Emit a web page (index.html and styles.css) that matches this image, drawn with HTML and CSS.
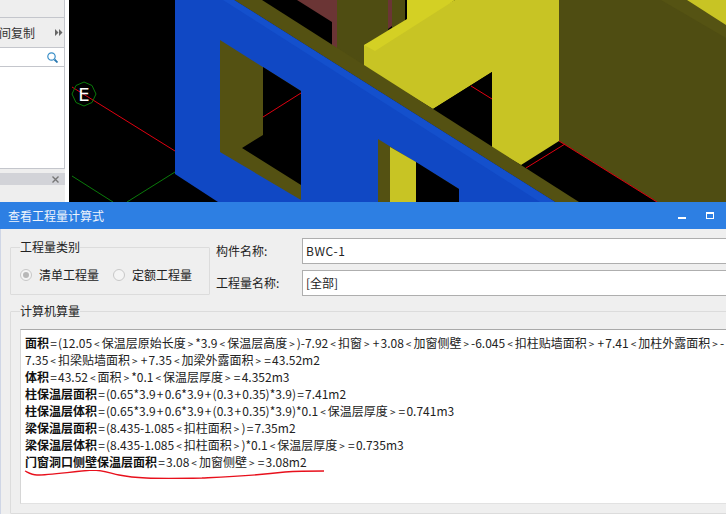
FILE: index.html
```html
<!DOCTYPE html>
<html lang="zh-CN">
<head>
<meta charset="utf-8">
<title>查看工程量计算式</title>
<link rel="stylesheet" href="styles.css">
</head>
<body>
<div class="app">
  <div class="top">
    <aside class="side">
      <div class="side-panel">
        <div class="side-head"></div>
        <div class="side-tools"><span class="tool-text">间复制</span><span class="tool-more"><svg width="8" height="7" viewBox="0 0 8 7"><path d="M0 0l3.500 3.500L0 7zM4 0l3.500 3.500L4 7z" fill="#666"/></svg></span></div>
        <div class="side-search"><svg class="search-icon" width="11" height="11" viewBox="0 0 11 11"><circle cx="4.500" cy="4.500" r="3.700" fill="none" stroke="#3a8fc8" stroke-width="1.200"/><path d="M7.500 7.500L10.500 10.500" stroke="#2a78b0" stroke-width="1.800"/></svg></div>
        <div class="side-list"></div>
      </div>
      <div class="side-gap"></div>
      <div class="side-tab"><svg width="7" height="7" viewBox="0 0 7 7"><path d="M0.500 0.500L6.500 6.500M6.500 0.500L0.500 6.500" stroke="#777" stroke-width="1.400"/></svg></div>
      <div class="side-foot"></div>
    </aside>
    <svg class="scene" width="657" height="202" viewBox="69 0 657 202">
      <rect x="69" y="0" width="657" height="202" fill="#000"/>
      <path d="M72 87L175 151" stroke="#e00010" stroke-width="1" fill="none"/>
      <path d="M72 176L113 202M127 202L175 172" stroke="#0a7a0a" stroke-width="1" fill="none"/>
      <polygon points="84,82 92,85.500 96,94 92,102.500 84,106 76,102.500 72,94 76,85.500" fill="none" stroke="#0a7a0a" stroke-width="1"/>
      <text class="axis" x="84" y="101">E</text>
      <polygon points="559,0 726,0 726,202 657,202 559,141" fill="#4f4d12"/>
      <polygon points="661,0 687,0 726,25 726,38" fill="#555313"/>
      <polygon points="687,0 726,0 726,25" fill="#c8c424"/>
      <polygon points="559,141 521,165 579,202 657,202" fill="#000"/>
      <path d="M559 141L657 202M565 144L526 168" stroke="#e00010" stroke-width="1" fill="none"/>
      <polygon points="337,0 388,0 388,30 392,28 392,0 405,0 405,22 364,45 364,68 337,50" fill="#4f4d12"/>
      <polygon points="388,0 392,0 392,26 388,29" fill="#6b3535"/>
      <polygon points="405,0 407,0 407,20 405,21" fill="#000"/>
      <polygon points="263,0 297,0 332,22 332,46" fill="#000"/>
      <polygon points="297,0 337,0 337,50 332,46 332,22" fill="#6b3535"/>
      <polygon points="364,67 364,45 455,0 559,0 559,141 521,165 492,148 492,72 433,109" fill="#c8c424"/>
      <polygon points="364,45 407,19 407,0 455,0 375,51" fill="#d4d024"/>
      <polygon points="433,109 492,72 492,148 484,142" fill="#000"/>
      <path d="M471 86L492 99" stroke="#e00010" stroke-width="1" fill="none"/>
      <polygon points="262,0 234,0 555,202 579,202" fill="#545112"/>
      <polygon points="175,0 234,0 555,202 218,202 175,174" fill="#1048c4"/>
      <polygon points="223,0 234,0 555,202 540,202" fill="#1450cc"/>
      <polygon points="220,40 301,91 301,200 220,152" fill="#545112"/>
      <polygon points="263,67 301,91 301,185 242,148 263,135" fill="#000"/>
      <path d="M263 117L301 93" stroke="#e00010" stroke-width="1" fill="none"/>
      <polygon points="378,139 459,189 459,202 378,202" fill="#545112"/>
      <polygon points="390,147 416,162 416,202 390,202" fill="#c8c424"/>
      <polygon points="416,162 459,189 459,202 416,202" fill="#000"/>
    </svg>
  </div>
  <section class="dialog">
    <header class="titlebar">
      <span class="title">查看工程量计算式</span>
      <span class="win-btn win-min"></span>
      <span class="win-btn win-max"></span>
    </header>
    <div class="dialog-body">
      <div class="upper">
        <fieldset class="group type-group">
          <legend class="legend">工程量类别</legend>
          <div class="radios">
            <span class="radio checked"></span><span class="radio-label">清单工程量</span>
            <span class="radio second"></span><span class="radio-label">定额工程量</span>
          </div>
        </fieldset>
        <div class="fields">
          <div class="field"><span class="field-label">构件名称:</span><div class="field-box"><span class="code">BWC-1</span></div></div>
          <div class="field"><span class="field-label">工程量名称:</span><div class="field-box">[全部]</div></div>
        </div>
      </div>
      <fieldset class="group calc-group">
        <legend class="legend">计算机算量</legend>
        <div class="calc">
          <div class="calc-line"><b>面积</b><i class="eq">=</i>(12.05<i class="op">&lt;</i>保温层原始长度<i class="op">&gt;</i>*3.9<i class="op">&lt;</i>保温层高度<i class="op">&gt;</i>)-7.92<i class="op">&lt;</i>扣窗<i class="op">&gt;</i><i class="eq">+</i>3.08<i class="op">&lt;</i>加窗侧壁<i class="op">&gt;</i>-6.045<i class="op">&lt;</i>扣柱贴墙面积<i class="op">&gt;</i><i class="eq">+</i>7.41<i class="op">&lt;</i>加柱外露面积<i class="op">&gt;</i>-</div>
          <div class="calc-line">7.35<i class="op">&lt;</i>扣梁贴墙面积<i class="op">&gt;</i><i class="eq">+</i>7.35<i class="op">&lt;</i>加梁外露面积<i class="op">&gt;</i><i class="eq">=</i>43.52m2</div>
          <div class="calc-line"><b>体积</b><i class="eq">=</i>43.52<i class="op">&lt;</i>面积<i class="op">&gt;</i>*0.1<i class="op">&lt;</i>保温层厚度<i class="op">&gt;</i><i class="eq">=</i>4.352m3</div>
          <div class="calc-line"><b>柱保温层面积</b><i class="eq">=</i>(0.65*3.9<i class="eq">+</i>0.6*3.9<i class="eq">+</i>(0.3<i class="eq">+</i>0.35)*3.9)<i class="eq">=</i>7.41m2</div>
          <div class="calc-line"><b>柱保温层体积</b><i class="eq">=</i>(0.65*3.9<i class="eq">+</i>0.6*3.9<i class="eq">+</i>(0.3<i class="eq">+</i>0.35)*3.9)*0.1<i class="op">&lt;</i>保温层厚度<i class="op">&gt;</i><i class="eq">=</i>0.741m3</div>
          <div class="calc-line"><b>梁保温层面积</b><i class="eq">=</i>(8.435-1.085<i class="op">&lt;</i>扣柱面积<i class="op">&gt;</i>)<i class="eq">=</i>7.35m2</div>
          <div class="calc-line"><b>梁保温层体积</b><i class="eq">=</i>(8.435-1.085<i class="op">&lt;</i>扣柱面积<i class="op">&gt;</i>)*0.1<i class="op">&lt;</i>保温层厚度<i class="op">&gt;</i><i class="eq">=</i>0.735m3</div>
          <div class="calc-line"><b>门窗洞口侧壁保温层面积</b><i class="eq">=</i>3.08<i class="op">&lt;</i>加窗侧壁<i class="op">&gt;</i><i class="eq">=</i>3.08m2</div>
          <svg class="scribble" width="310" height="14" viewBox="0 0 310 14"><path d="M1 1C5 3 8 5 13 5C25 5 45 2 68 0C80 0 88 4 95 5C110 8 125 9 178 8C200 7 228 6 261 2C275 1 290 1 300 1" fill="none" stroke="#e8101c" stroke-width="1.300"/></svg>
        </div>
      </fieldset>
    </div>
  </section>
</div>
</body>
</html>
```
FILE: styles.css
```css
* { box-sizing: border-box; }
html, body { margin: 0; padding: 0; width: 726px; height: 514px; overflow: hidden; }
body { font-family: "Noto Sans CJK SC", "Liberation Sans", sans-serif; font-size: 12px; color: #222; background: #efefef; }
.app { display: flex; flex-direction: column; width: 726px; height: 514px; overflow: hidden; }
.top { display: flex; height: 202px; flex: none; }
.side { width: 69px; flex: none; display: flex; flex-direction: column; background: #fff; }
.side-panel { width: 65px; height: 169px; display: flex; flex-direction: column; border-right: 1px solid #c4c6cc; border-bottom: 1px solid #c4c6cc; }
.side-head { height: 18px; background: #eee; border-bottom: 1px solid #c4c6cc; flex: none; }
.side-tools { height: 30px; background: #eee; border-bottom: 1px solid #c4c6cc; display: flex; align-items: center; flex: none; overflow: hidden; }
.tool-text { font-size: 12px; line-height: 16px; color: #333; margin-left: -1px; white-space: nowrap; }
.tool-more { margin-left: auto; margin-right: 1px; display: flex; }
.side-search { height: 19px; border-bottom: 1px solid #c4c6cc; display: flex; align-items: center; justify-content: flex-end; padding-right: 6px; flex: none; }
.side-list { flex: 1; background: #fff; }
.side-gap { height: 4px; width: 65px; background: #eee; flex: none; }
.side-tab { height: 12px; width: 65px; background: #d2d3d8; display: flex; align-items: center; justify-content: flex-end; padding-right: 6px; flex: none; }
.side-foot { flex: 1; width: 65px; background: #eee; }
.scene { display: block; flex: none; }
.axis { font-family: "DejaVu Sans", sans-serif; font-size: 18px; fill: #fff; text-anchor: middle; }
.dialog { flex: 1; display: flex; flex-direction: column; min-height: 0; border-left: 1px solid #cfd6e6; }
.titlebar { height: 27px; flex: none; background: #2d7fe3; display: flex; align-items: center; position: relative; margin-left: -1px; padding-left: 8px; }
.title { color: #eef4fc; font-size: 12px; line-height: 16px; }
.win-btn { position: absolute; display: block; }
.win-min { left: 678px; top: 15px; width: 8px; height: 2px; background: #fff; }
.win-max { left: 706px; top: 10px; width: 8px; height: 7px; border: 1px solid #fff; border-top-width: 2px; }
.dialog-body { flex: 1; display: flex; flex-direction: column; padding: 10px 0 0 9px; min-height: 0; }
.upper { display: flex; height: 64px; flex: none; }
.group { margin: 0; padding: 0; min-width: 0; border: 1px solid #dcdcdc; border-radius: 1px; }
.legend { margin-left: 9px; padding: 0; font-size: 12px; line-height: 16px; color: #222; }
.type-group { width: 200px; height: 56px; flex: none; }
.radios { display: flex; align-items: center; padding: 12px 0 0 9px; }
.radio { width: 12px; height: 12px; border-radius: 50%; border: 1px solid #c8c8c8; background: #f4f4f4; flex: none; position: relative; }
.radio.checked::after { content: ""; position: absolute; left: 2px; top: 2px; width: 6px; height: 6px; border-radius: 50%; background: #b8b8b8; }
.radio.second { margin-left: 14px; }
.radio-label { margin-left: 7px; line-height: 16px; color: #222; white-space: nowrap; }
.fields { display: flex; flex-direction: column; gap: 6px; margin: -1px 0 0 6px; flex: none; }
.field { display: flex; align-items: center; width: 520px; height: 26px; }
.field-label { width: 86px; flex: none; color: #222; line-height: 16px; }
.field-box { flex: 1; height: 26px; margin-right: -20px; background: #fff; border: 1px solid #aeaeae; padding-left: 3px; line-height: 24px; color: #222; }
.code { letter-spacing: 0.6px; }
.calc-group { flex: 1; width: 740px; min-height: 0; }
.calc { position: relative; margin: 10px 0 0 9px; height: 175px; background: #fff; border-top: 1px solid #a9a9a9; border-left: 1px solid #d6d6d6; border-bottom: 1px solid #e2e2e2; padding: 4px 0 0 4px; }
.calc-line { height: 17px; line-height: 17px; font-size: 12px; color: #222; white-space: nowrap; }
.calc-line b { font-weight: 700; color: #111; }
.op { font-style: normal; font-size: 10px; display: inline-block; width: 9.6px; text-align: center; line-height: 1; }
.eq { font-style: normal; display: inline-block; width: 9px; text-align: center; line-height: 1; }
.scribble { position: absolute; left: 3px; top: 140px; display: block; }
```
